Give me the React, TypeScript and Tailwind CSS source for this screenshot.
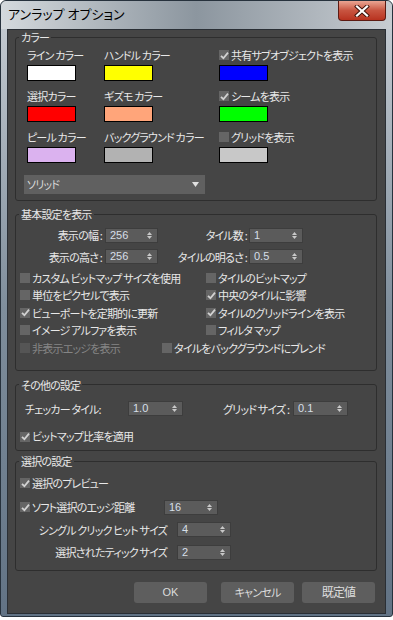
import type { ReactNode } from 'react'

function Tick() {
  return (
    <svg width="9" height="9" viewBox="0 0 9 9">
      <path d="M1 4.8 L3.4 7.2 L8 1.6" fill="none" stroke="#d2d2d2" strokeWidth="1.8" />
    </svg>
  )
}

function Cb({ label, on, disabled, className = '' }: { label: string; on?: boolean; disabled?: boolean; className?: string }) {
  return (
    <div className={`flex items-center gap-[2px] ${className}`}>
      <span className={`w-[10px] h-[10px] flex-shrink-0 flex items-center justify-center ${disabled ? 'bg-[#555]' : 'bg-[#656565]'}`}>
        {on && <Tick />}
      </span>
      <span className={`whitespace-nowrap ${disabled ? 'text-[#858585]' : ''}`}>{label}</span>
    </div>
  )
}

function Spin({ value, className = '' }: { value: string; className?: string }) {
  return (
    <div className={`h-[15px] bg-[#5b5b5b] border border-[#3d3d3d] flex items-center justify-between pl-[4px] pr-[5px] ${className}`}>
      <span className="font-['Liberation_Sans',sans-serif] text-[11px] tracking-normal text-[#d6dfe8] leading-none">{value}</span>
      <span className="flex flex-col gap-[1px]">
        <svg width="5" height="3" viewBox="0 0 5 3"><path d="M2.5 0 L5 3 L0 3 Z" fill="#c9c9c9" /></svg>
        <svg width="5" height="3" viewBox="0 0 5 3"><path d="M0 0 L5 0 L2.5 3 Z" fill="#c9c9c9" /></svg>
      </span>
    </div>
  )
}

function Group({ title, className = '', children }: { title: string; className?: string; children: ReactNode }) {
  return (
    <fieldset className={`ml-[7px] mr-[8px] border border-[#2e2e2e] rounded-[3px] ${className}`}>
      <legend className="ml-[3px] px-[2px] leading-[12px]">{title}</legend>
      {children}
    </fieldset>
  )
}

function Swatch({ color }: { color: string }) {
  return <div className={`mt-[3px] w-[49px] h-[16px] border border-black ${color}`} />
}

export default function App() {
  return (
    <div className="w-[393px] h-[620px] bg-white overflow-hidden font-['Noto_Sans_CJK_JP','Noto_Sans',sans-serif] [font-feature-settings:'palt'] text-[11px] tracking-[-0.8px]">
      <div className="h-[617px] flex flex-col rounded-t-[6px] rounded-b-[3px] border border-[#27323d] bg-gradient-to-b from-[#c9cfd5] via-[#7f8e9c] to-[#627385]">
        {/* title bar */}
        <div className="h-[28px] flex items-start justify-between bg-gradient-to-r from-[#d4d9dd] via-[#8c969f] to-[#c7ccd1] rounded-t-[6px]">
          <span className="pl-[7px] pt-[5px] text-[13px] leading-[16px] text-black tracking-normal">アンラップ オプション</span>
          <div className="mr-[6px] w-[48px] h-[20px] rounded-b-[4px] border border-t-0 border-[#5c1a12] bg-gradient-to-b from-[#e9a593] via-[#c85440] to-[#b8321f] flex items-center justify-center">
            <svg width="16" height="12" viewBox="0 0 16 12">
              <path d="M3 1.5 L13 10.5 M13 1.5 L3 10.5" stroke="#3a1008" strokeWidth="4" strokeLinecap="square" />
              <path d="M3 1.5 L13 10.5 M13 1.5 L3 10.5" stroke="#ffffff" strokeWidth="2.2" strokeLinecap="square" />
            </svg>
          </div>
        </div>

        {/* client */}
        <div className="mx-[6px] h-[585px] border border-[#2a2f35] bg-[#454545] text-[#e8e8e8] flex flex-col">
          <Group title="カラー" className="mt-[1px] pb-[6px]">
            <div className="grid grid-cols-[77px_115px_1fr] gap-y-[8px] pl-[11px] pt-[5px]">
              <div><div className="h-[14px] leading-[14px]">ライン カラー</div><Swatch color="bg-white" /></div>
              <div><div className="h-[14px] leading-[14px]">ハンドル カラー</div><Swatch color="bg-[#ffff00]" /></div>
              <div><Cb className="h-[14px]" on label="共有サブオブジェクトを表示" /><Swatch color="bg-[#0000ff]" /></div>
              <div><div className="h-[14px] leading-[14px]">選択カラー</div><Swatch color="bg-[#ff0000]" /></div>
              <div><div className="h-[14px] leading-[14px]">ギズモ カラー</div><Swatch color="bg-[#ffa57a]" /></div>
              <div><Cb className="h-[14px]" on label="シームを表示" /><Swatch color="bg-[#00ff00]" /></div>
              <div><div className="h-[14px] leading-[14px]">ピール カラー</div><Swatch color="bg-[#dbb2ef]" /></div>
              <div><div className="h-[14px] leading-[14px]">バックグラウンド カラー</div><Swatch color="bg-[#b2b2b2]" /></div>
              <div><Cb className="h-[14px]" label="グリッドを表示" /><Swatch color="bg-[#c8c8c8]" /></div>
            </div>
            <div className="ml-[8px] mt-[12px] w-[181px] h-[19px] bg-[#606060] flex items-center justify-between pl-[3px] pr-[6px] text-[#d8d8d8]">
              <span>ソリッド</span>
              <svg width="7" height="5" viewBox="0 0 7 5"><path d="M0 0 L7 0 L3.5 5 Z" fill="#e0e0e0" /></svg>
            </div>
          </Group>

          <Group title="基本設定を表示" className="mt-[7px] pb-[13px]">
            <div className="pt-[7px] flex flex-col gap-[5px]">
              <div className="flex items-center">
                <span className="w-[86px] text-right whitespace-nowrap">表示の幅 :</span>
                <Spin className="ml-[3px] w-[53px]" value="256" />
                <span className="w-[89px] text-right whitespace-nowrap">タイル数 :</span>
                <Spin className="ml-[2px] w-[54px]" value="1" />
              </div>
              <div className="flex items-center">
                <span className="w-[86px] text-right whitespace-nowrap">表示の高さ :</span>
                <Spin className="ml-[3px] w-[53px]" value="256" />
                <span className="w-[89px] text-right whitespace-nowrap">タイルの明るさ :</span>
                <Spin className="ml-[2px] w-[54px]" value="0.5" />
              </div>
            </div>
            <div className="mt-[4px] pl-[4px] grid grid-cols-[186px_1fr] auto-rows-[17.5px] items-center">
              <Cb label="カスタム ビットマップ サイズを使用" />
              <Cb label="タイルのビットマップ" />
              <Cb label="単位をピクセルで表示" />
              <Cb on label="中央のタイルに影響" />
              <Cb on label="ビューポートを定期的に更新" />
              <Cb on label="タイルのグリッドラインを表示" />
              <Cb label="イメージ アルファを表示" />
              <Cb label="フィルタ マップ" />
              <div className="col-span-2 flex items-center">
                <Cb disabled className="w-[142px]" label="非表示エッジを表示" />
                <Cb label="タイルをバックグラウンドにブレンド" />
              </div>
            </div>
          </Group>

          <Group title="その他の設定" className="mt-[8px] pb-[5px]">
            <div className="pt-[10px] flex items-center">
              <span className="ml-[9px] w-[103px] whitespace-nowrap">チェッカー タイル:</span>
              <Spin className="w-[55px]" value="1.0" />
              <span className="ml-[40px] w-[70px] whitespace-nowrap">グリッド サイズ :</span>
              <Spin className="w-[55px]" value="0.1" />
            </div>
            <div className="mt-[11px] pl-[4px] h-[17px] flex items-center">
              <Cb on label="ビットマップ比率を適用" />
            </div>
          </Group>

          <Group title="選択の設定" className="mt-[4px] pb-[9px]">
            <div className="pt-[8px] pl-[4px] h-[24px] flex items-center">
              <Cb on label="選択のプレビュー" />
            </div>
            <div className="mt-[8px] pl-[4px] flex items-center">
              <Cb on className="w-[144px]" label="ソフト選択のエッジ距離" />
              <Spin className="w-[54px]" value="16" />
            </div>
            <div className="mt-[6px] flex items-center">
              <span className="w-[151px] text-right whitespace-nowrap">シングル クリック ヒット サイズ</span>
              <Spin className="ml-[10px] w-[54px]" value="4" />
            </div>
            <div className="mt-[6px] flex items-center">
              <span className="w-[151px] text-right whitespace-nowrap">選択されたティック サイズ</span>
              <Spin className="ml-[10px] w-[54px]" value="2" />
            </div>
          </Group>

          <div className="mt-[11px] mr-[10px] flex justify-end text-[#dcdcdc]">
            <button className="w-[73px] h-[21px] rounded-[3px] bg-[#5e5e5e] font-['Liberation_Sans',sans-serif] tracking-normal">OK</button>
            <button className="ml-[14px] w-[73px] h-[21px] rounded-[3px] bg-[#5e5e5e]">キャンセル</button>
            <button className="ml-[8px] w-[73px] h-[21px] rounded-[3px] bg-[#5e5e5e] text-[12px]">既定値</button>
          </div>
        </div>
      </div>
    </div>
  )
}
